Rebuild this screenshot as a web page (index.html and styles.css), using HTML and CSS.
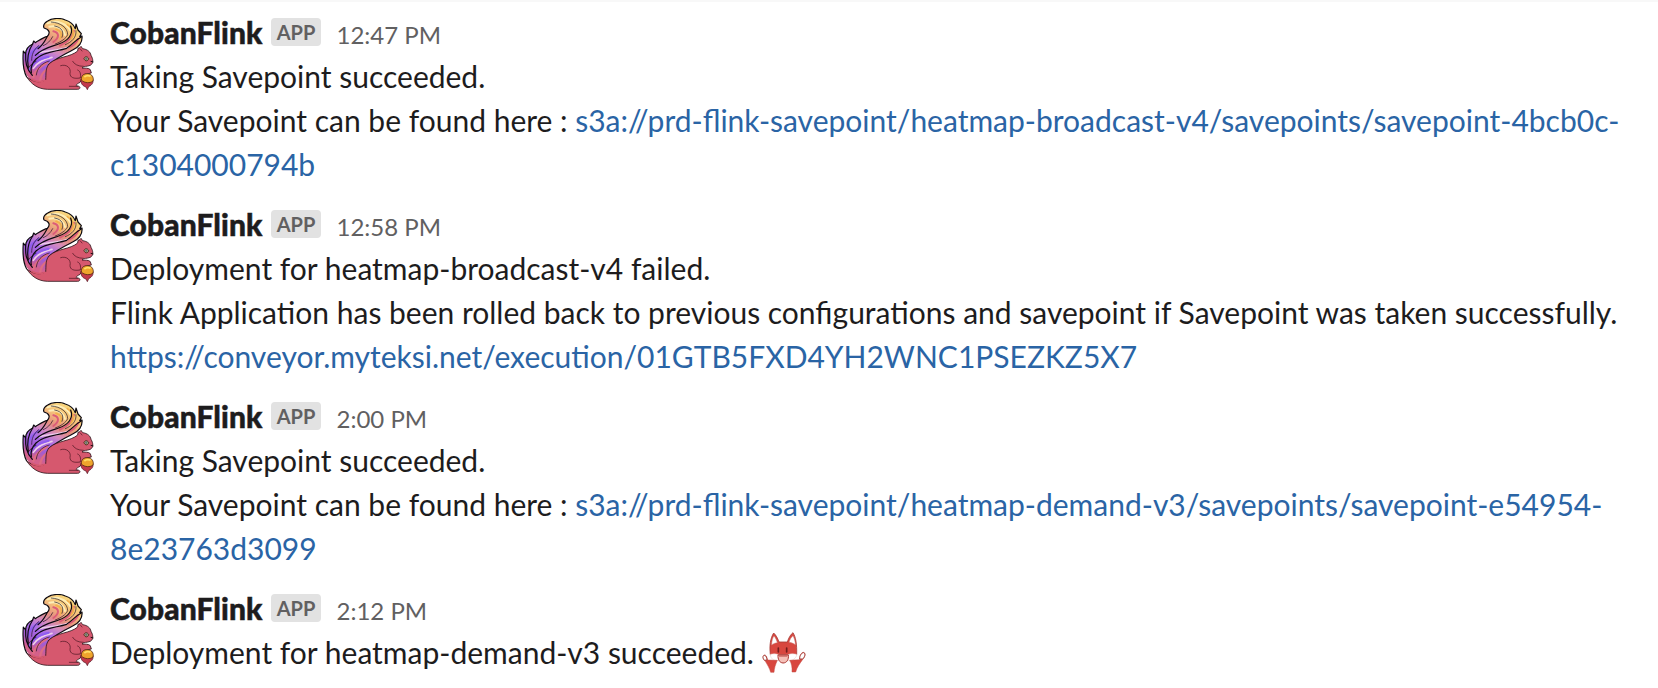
FILE: index.html
```html
<!DOCTYPE html>
<html lang="en">
<head>
<meta charset="utf-8">
<title>CobanFlink</title>
<link rel="stylesheet" href="styles.css">
</head>
<body>
<svg class="defs" aria-hidden="true">
  <defs>
    <linearGradient id="tail" x1="165" y1="60" x2="75" y2="225" gradientUnits="userSpaceOnUse">
      <stop offset="0" stop-color="#f8d67c"/>
      <stop offset=".2" stop-color="#f6c27c"/>
      <stop offset=".38" stop-color="#e58e80"/>
      <stop offset=".52" stop-color="#d48ac0"/>
      <stop offset=".68" stop-color="#a86be8"/>
      <stop offset=".85" stop-color="#a35bd0"/>
      <stop offset="1" stop-color="#d4608a"/>
    </linearGradient>
    <symbol id="squirrel" viewBox="36 54 216 216">
      <path d="M102 84 C99 77 103 69 113 63 C127 54 151 53 166 60 C182 65 192 76 196 86 L198 72 L204 90 L214 101 L209 110 L216 108 C218 128 205 142 188 150 C160 164 135 176 114 196 L110 262 C76 261 45 230 40 200 C38 185 40 168 40 153 L47 162 C47 149 55 138 68 132 L71 123 L76 128 C88 121 100 112 112 109 C121 100 119 88 102 84Z" fill="url(#tail)"/>
      <g fill="none" stroke-linecap="round">
        <path d="M112 70 C144 58 170 73 181 91 M118 80 C145 74 161 89 165 105" stroke="#fdeeb8" stroke-width="6"/>
        <path d="M130 94 C147 98 150 112 130 126 M192 92 C188 113 172 127 150 137 M205 116 C200 130 188 138 176 143" stroke="#dc5c78" stroke-width="6"/>
        <path d="M172 74 C192 87 195 103 183 117 M138 88 C154 92 158 104 150 116" stroke="#f3b04c" stroke-width="5"/>
        <path d="M88 158 C108 152 146 152 174 142 M70 205 C80 189 99 178 126 172" stroke="#eccdea" stroke-width="5"/>
        <path d="M55 182 C58 162 68 149 90 139 M58 212 C65 191 88 176 116 170" stroke="#8f5cf0" stroke-width="6"/>
        <path d="M70 231 C76 211 94 197 112 188 M90 243 C92 226 98 217 110 208" stroke="#de6c83" stroke-width="7"/>
      </g>
      <path d="M102 84 C99 77 103 69 113 63 C127 54 151 53 166 60 C182 65 192 76 196 86 L198 72 L204 90 L214 101 L209 110 L216 108 C218 128 205 142 188 150 C160 164 135 176 114 196 M50 231 C41 215 37 190 40 153 L47 162 C47 149 55 138 68 132 L71 123 L76 128 C88 121 100 112 112 109 C121 100 119 88 102 84" fill="none" stroke="#0d0a10" stroke-width="3.6" stroke-linejoin="round"/>
      <g fill="none" stroke="#0d0a10" stroke-width="3.6" stroke-linecap="round">
        <path d="M112 109 C104 124 100 134 84 146 M182 78 C191 102 176 122 146 132 C124 140 98 144 76 166"/>
        <path d="M214 111 C198 119 190 131 170 145 C138 155 101 155 78 177 C66 190 61 205 64 218"/>
        <path d="M68 132 C55 151 50 174 55 204 M47 163 C46 186 48 205 67 226"/>
      </g>
      <g fill="none" stroke="#1c1020" stroke-width="2" stroke-linecap="round">
        <path d="M118 183 C93 190 81 206 79 225 M54 205 C63 194 68 188 78 184 M86 137 C70 150 65 164 65 181"/>
        <path d="M124 66 C153 68 173 84 173 104 C168 116 152 126 136 132 M134 78 C158 82 162 98 156 112 M198 92 C200 112 186 126 166 134 M128 110 C122 122 112 132 100 137"/>
      </g>
      <path d="M203 153 L204 145 L210 143 L213 139 L218 146 C232 148 241 155 243 166 C250 178 251 190 241 196 C231 200 220 198 216 204 C225 205 235 203 241 209 L244 219 L225 223 L216 237 L210 247 C199 253 194 257 203 258 C213 259 211 268 203 268 L112 268 C83 267 64 252 50 231 C69 245 88 250 107 240 C109 220 105 204 119 190 C141 170 181 172 203 153Z" fill="#d6586e" stroke="#2a1017" stroke-width="2.4" stroke-linejoin="round"/>
      <g fill="none" stroke="#521925" stroke-width="2.2" stroke-linecap="round">
        <path d="M152 197 C171 191 184 205 180 220 C180 233 191 237 210 234 M188 184 C193 193 204 199 220 199 M203 210 C211 213 213 222 211 233 M178 259 H203 M211 147 L216 153"/>
      </g>
      <path d="M64 238 C78 246 94 246 108 241" fill="none" stroke="#d6586e" stroke-width="5"/>
      <path d="M222 176 C224 169 232 168 236 176 C234 184 225 185 222 176Z" fill="#e0c86f" stroke="#241016" stroke-width="2.5"/>
      <circle cx="229" cy="176" r="4" fill="#68717c"/>
      <path d="M242 184 L250 186" stroke="#1b0b10" stroke-width="3"/>
      <path d="M213 237 C211 250 218 258 228 261 L232 269 L236 260 C247 255 252 246 248 235Z" fill="#c43a4c" stroke="#4e1420" stroke-width="2"/>
      <path d="M214 240 C213 226 222 220 234 221 C246 222 252 232 249 243 C241 250 224 250 214 240Z" fill="#efa52d" stroke="#4a210c" stroke-width="2.2"/>
      <path d="M223 231 C229 226 236 226 242 229" fill="none" stroke="#ffe067" stroke-width="5"/>
    </symbol>
  </defs>
</svg>

<main class="messages">
  <article class="message">
    <svg class="avatar" role="img" aria-label="CobanFlink"><use href="#squirrel"/></svg>
    <div class="content">
      <header class="meta"><span class="sender">CobanFlink</span><span class="badge">APP</span><time class="time">12:47 PM</time></header>
      <p class="text">Taking Savepoint succeeded.<br>Your Savepoint can be found here : <a class="link">s3a://prd-flink-savepoint/heatmap-broadcast-v4/savepoints/savepoint-4bcb0c-<br>c1304000794b</a></p>
    </div>
  </article>

  <article class="message">
    <svg class="avatar" role="img" aria-label="CobanFlink"><use href="#squirrel"/></svg>
    <div class="content">
      <header class="meta"><span class="sender">CobanFlink</span><span class="badge">APP</span><time class="time">12:58 PM</time></header>
      <p class="text">Deployment for heatmap-broadcast-v4 failed.<br>Flink Application has been rolled back to previous configurations and savepoint if Savepoint was taken successfully.<br><a class="link">https://conveyor.myteksi.net/execution/01GTB5FXD4YH2WNC1PSEZKZ5X7</a></p>
    </div>
  </article>

  <article class="message">
    <svg class="avatar" role="img" aria-label="CobanFlink"><use href="#squirrel"/></svg>
    <div class="content">
      <header class="meta"><span class="sender">CobanFlink</span><span class="badge">APP</span><time class="time">2:00 PM</time></header>
      <p class="text">Taking Savepoint succeeded.<br>Your Savepoint can be found here : <a class="link">s3a://prd-flink-savepoint/heatmap-demand-v3/savepoints/savepoint-e54954-<br>8e23763d3099</a></p>
    </div>
  </article>

  <article class="message">
    <svg class="avatar" role="img" aria-label="CobanFlink"><use href="#squirrel"/></svg>
    <div class="content">
      <header class="meta"><span class="sender">CobanFlink</span><span class="badge">APP</span><time class="time">2:12 PM</time></header>
      <p class="text">Deployment for heatmap-demand-v3 succeeded. <svg class="emoji" viewBox="36 30 132 132" role="img" aria-label="Celebrating fox">
        <path d="M61 104 C58 76 61 55 71 39 C77 44 83 54 87 66 H112 C116 53 122 43 129 38 C137 50 141 72 140 104Z" fill="#d8473f" stroke="#a93c37" stroke-width="2.5" stroke-linejoin="round"/>
        <path d="M65 75 C65 63 68 53 72 48 C77 54 80 61 82 68 C75 69 70 71 65 75Z M117 67 C120 57 124 51 129 47 C133 55 136 64 136 74 C130 70 124 68 117 67Z" fill="#fff" stroke="#c9756f" stroke-width="1.5"/>
        <path d="M61 103 C72 100 79 101 87 105 H112 C121 100 130 100 140 103 C140 111 133 120 120 122 H78 C66 120 61 111 61 103Z" fill="#fff" stroke="#e4c4c1" stroke-width="1.5"/>
        <path d="M85 84 V96 M110 84 V96" stroke="#711d1d" stroke-width="5" stroke-linecap="round"/>
        <path d="M84 105 H115 C117 119 110 129 99 129 C88 128 83 117 84 105Z" fill="#f5c0b8" stroke="#ac3733" stroke-width="3"/>
        <path d="M87 108 H112" stroke="#c9605a" stroke-width="4"/>
        <path d="M46 124 C37 118 38 106 43 105 C49 104 51 112 53 120 L82 121 C76 134 73 145 72 157 H62 C59 145 52 134 46 124Z M119 121 L149 119 C148 107 154 97 161 97 C168 99 166 110 159 117 C150 130 141 141 137 156 H126 C127 143 125 131 119 121Z" fill="#d8473f" stroke="#c34a43" stroke-width="1.5"/>
        <path d="M44 121 C37 115 38 107 43 106 C49 107 50 113 51 120Z M149 117 C149 106 155 98 161 98 C167 101 165 110 158 117Z" fill="#fff" stroke="#a84842" stroke-width="3"/>
      </svg></p>
    </div>
  </article>
</main>
</body>
</html>
```
FILE: styles.css
```css
body {
  margin: 0;
  background: #fff;
  color: #1d1c1d;
  font-family: Lato, "Liberation Sans", sans-serif;
  font-size: 30px;
  line-height: 44px;
}

.defs {
  position: absolute;
  width: 0;
  height: 0;
}

.messages {
  border-top: 2px solid #f8f8f8;
}

.message {
  display: flex;
  gap: 16px;
  padding: 8px 0 8px 22px;
}

.avatar {
  flex: none;
  width: 72px;
  height: 72px;
  margin-top: 8px;
}

.content {
  flex: 1;
  white-space: nowrap;
}

.meta {
  display: flex;
  align-items: baseline;
  height: 44px;
}

.sender {
  font-weight: 900;
  letter-spacing: 0.1px;
  -webkit-text-stroke: 0.5px #1d1c1d;
}

.badge {
  align-self: flex-start;
  width: 50px;
  margin: 8px 15.5px 0 8.5px;
  border-radius: 4px;
  background: #e2e2e2;
  color: #616061;
  font-size: 20px;
  font-weight: 700;
  line-height: 28px;
  text-align: center;
}

.time {
  color: #616061;
  font-size: 24px;
}

.text {
  margin: 0;
}

.link {
  color: #2a64a5;
}

.emoji {
  width: 44px;
  height: 44px;
  vertical-align: top;
}
```
